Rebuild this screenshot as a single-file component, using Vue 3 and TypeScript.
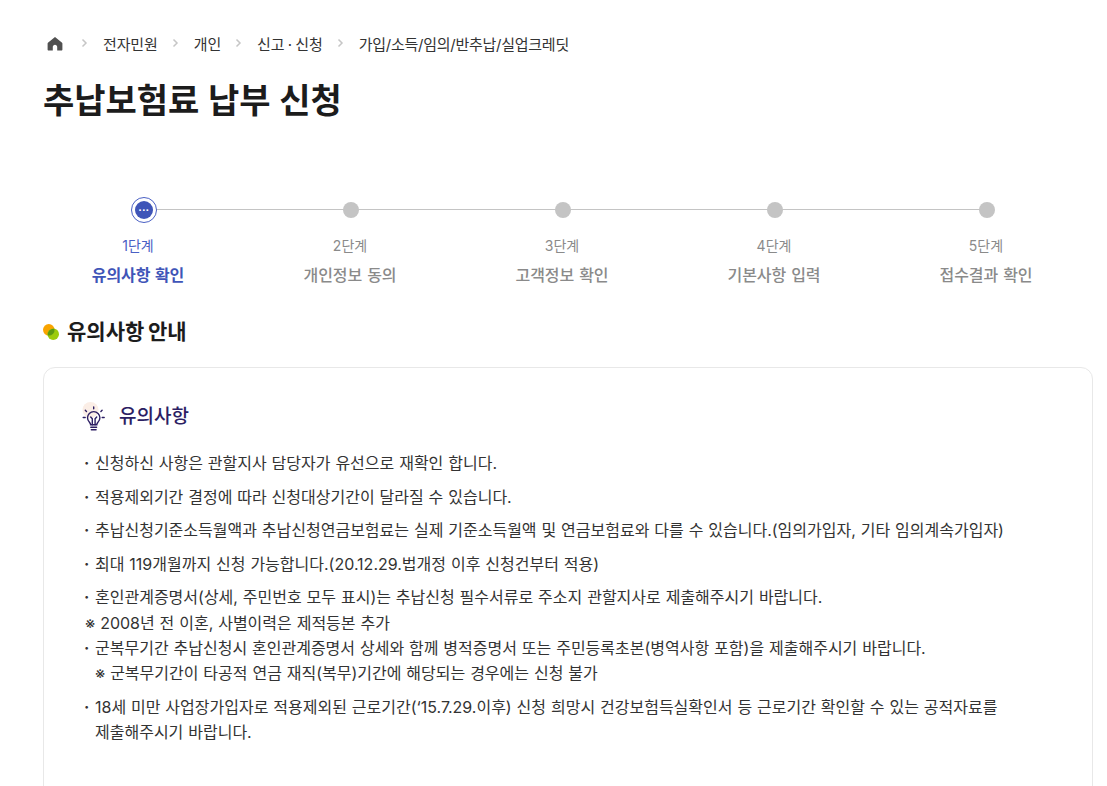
<script setup lang="ts">
const crumbs = ["전자민원", "개인", "신고 · 신청", "가입/소득/임의/반추납/실업크레딧"];

const steps = [
  { no: "1단계", label: "유의사항 확인" },
  { no: "2단계", label: "개인정보 동의" },
  { no: "3단계", label: "고객정보 확인" },
  { no: "4단계", label: "기본사항 입력" },
  { no: "5단계", label: "접수결과 확인" },
];
</script>

<template>
  <div class="page">
    <nav class="crumbs">
      <svg class="home" width="16" height="16" viewBox="0 0 16 16" fill="#505050">
        <path d="M8 1 1.200 6.400c-.4.3-.6.7-.6 1.200v5.900c0 .6.4 1 1 1h4.200V11c0-1.200 1-2.200 2.200-2.200s2.200 1 2.200 2.200v3.500h4.200c.6 0 1-.4 1-1V7.600c0-.5-.2-.9-.6-1.200z" />
      </svg>
      <template v-for="c in crumbs" :key="c">
        <svg class="chev" width="7" height="10" viewBox="0 0 7 10" fill="none" stroke="#c6c6c6" stroke-width="1.500">
          <path d="M1.500 1.500 5 5 1.500 8.500" />
        </svg>
        <span class="crumb">{{ c }}</span>
      </template>
    </nav>

    <h1 class="title">추납보험료 납부 신청</h1>

    <ol class="stepper">
      <li v-for="(s, i) in steps" :key="s.no" class="step" :class="{ active: i === 0 }">
        <div class="dot-row">
          <span v-if="i === 0" class="ring"><span class="core">···</span></span>
          <span v-else class="dot"></span>
        </div>
        <div class="no">{{ s.no }}</div>
        <div class="label">{{ s.label }}</div>
      </li>
    </ol>

    <h2 class="section">
      <svg width="16" height="16" viewBox="0 0 16 16">
        <circle cx="5.800" cy="5.800" r="5.800" fill="#f9a400" />
        <circle cx="10.200" cy="10.200" r="5.800" fill="#9ccb0c" />
        <path d="M4.800 11.500a5.800 5.800 0 0 1 6.700-6.700 5.800 5.800 0 0 1-6.700 6.700z" fill="#5d9a12" />
      </svg>
      유의사항 안내
    </h2>

    <section class="card">
      <h3 class="card-title">
        <svg width="25" height="30" viewBox="0 0 25 30" fill="none" stroke="#2c1e63" stroke-width="1.400" stroke-linecap="round">
          <circle cx="8.500" cy="8" r="8" fill="#fbeee6" stroke="none" />
          <path d="M7.600 20.500c-1.400-1.400-2.100-2.900-2.100-4.700a6.200 6.200 0 0 1 12.400 0c0 1.800-.7 3.300-2.100 4.700-.7.8-1 1.300-1 2.300H8.600c0-1-.3-1.500-1-2.300z" />
          <path d="M10.300 22.800v-6l-1.600-1.800M13.100 22.800v-6l1.600-1.800" />
          <path d="M8.800 25.200h5.800M9.300 27.700h4.800" />
          <path d="M11.700 6.800V5M4.500 9.500 3.300 8.300M18.900 9.500 20.100 8.300M1.200 15.500h2M20.200 15.500h2" />
        </svg>
        유의사항
      </h3>
      <ul class="notes">
        <li>신청하신 사항은 관할지사 담당자가 유선으로 재확인 합니다.</li>
        <li>적용제외기간 결정에 따라 신청대상기간이 달라질 수 있습니다.</li>
        <li>추납신청기준소득월액과 추납신청연금보험료는 실제 기준소득월액 및 연금보험료와 다를 수 있습니다.(임의가입자, 기타 임의계속가입자)</li>
        <li>최대 119개월까지 신청 가능합니다.(20.12.29.법개정 이후 신청건부터 적용)</li>
        <li class="tight">
          혼인관계증명서(상세, 주민번호 모두 표시)는 추납신청 필수서류로 주소지 관할지사로 제출해주시기 바랍니다.
          <p class="remark out">※ 2008년 전 이혼, 사별이력은 제적등본 추가</p>
        </li>
        <li>
          군복무기간 추납신청시 혼인관계증명서 상세와 함께 병적증명서 또는 주민등록초본(병역사항 포함)을 제출해주시기 바랍니다.
          <p class="remark">※ 군복무기간이 타공적 연금 재직(복무)기간에 해당되는 경우에는 신청 불가</p>
        </li>
        <li>18세 미만 사업장가입자로 적용제외된 근로기간(‘15.7.29.이후) 신청 희망시 건강보험득실확인서 등 근로기간 확인할 수 있는 공적자료를 제출해주시기 바랍니다.</li>
      </ul>
    </section>
  </div>
</template>

<style>
html,
body {
  height: 786px;
  overflow: hidden;
}
</style>

<style scoped>
.page {
  padding: 0 14px 0 43px;
  font-family: Inter, "Noto Sans CJK KR", "Noto Sans", sans-serif;
  word-spacing: 0.035em;
  color: #222;
}

.crumbs {
  display: flex;
  align-items: center;
  height: 20px;
  padding-top: 33px;
  font-size: 15px;
  letter-spacing: -0.12px;
  word-spacing: -0.8px;
  color: #333;
}

.crumb:last-child {
  letter-spacing: -0.25px;
}

.home {
  margin: 2px 4px 0 4px;
}

.chev {
  margin: 0 15px 0 14px;
}

.title {
  margin: 23px 0 0;
  font-size: 34px;
  line-height: 50px;
  font-weight: 700;
  color: #1c1c1c;
}

.stepper {
  position: relative;
  display: grid;
  grid-template-columns: repeat(5, 212px);
  margin: 70px 0 0 -11px;
  padding: 0;
  list-style: none;
}

.stepper::before {
  content: "";
  position: absolute;
  top: 13px;
  left: 120px;
  width: 830px;
  height: 1px;
  background: #c4c4c4;
}

.step {
  position: relative;
  text-align: center;
  color: #8a8a8a;
}

.dot-row {
  display: flex;
  justify-content: center;
  align-items: center;
  height: 27px;
}

.dot {
  width: 16px;
  height: 16px;
  margin-left: 1px;
  border-radius: 50%;
  background: #c4c4c4;
}

.ring {
  display: flex;
  align-items: center;
  justify-content: center;
  width: 26px;
  height: 26px;
  margin-left: 12px;
  box-sizing: border-box;
  border: 1px solid #4a60c4;
  border-radius: 50%;
  background: #fff;
}

.core {
  width: 18px;
  height: 18px;
  border-radius: 50%;
  background: #3f55b8;
  color: #fff;
  font: 700 11px/18px "Liberation Sans", sans-serif;
  text-align: center;
}

.no {
  margin-top: 13px;
  font-size: 14px;
  line-height: 20px;
}

.label {
  margin-top: 8px;
  font-size: 16px;
  line-height: 22px;
  font-weight: 500;
}

.active .no {
  color: #4a60c4;
}

.active .label {
  color: #3f55b8;
  font-weight: 700;
}

.section {
  display: flex;
  align-items: center;
  gap: 8px;
  margin: 31px 0 0;
  font-size: 21px;
  line-height: 30px;
  font-weight: 700;
  word-spacing: -1.200px;
  color: #1c1c1c;
}

.card {
  margin-top: 20px;
  padding: 36px 38px 80px;
  border: 1px solid #e8e8e8;
  border-radius: 12px;
}

.card-title {
  display: flex;
  align-items: center;
  gap: 12px;
  margin: -2px 0 19px;
  font-size: 19px;
  line-height: 30px;
  font-weight: 500;
  color: #2c1e63;
}

.notes {
  margin: 0;
  padding: 0;
  list-style: none;
  font-size: 16px;
  line-height: 25px;
  word-spacing: 0.400px;
  word-break: keep-all;
  color: #333;
}

.notes li {
  position: relative;
  margin-bottom: 8.500px;
  padding-left: 13px;
}

.notes li::before {
  content: "·";
  position: absolute;
  left: 2px;
  font-weight: 700;
}

.notes li.tight {
  margin-bottom: 0;
}

.remark {
  margin: 0;
}

.remark.out {
  margin: 1px 0 0 -10px;
}
</style>
